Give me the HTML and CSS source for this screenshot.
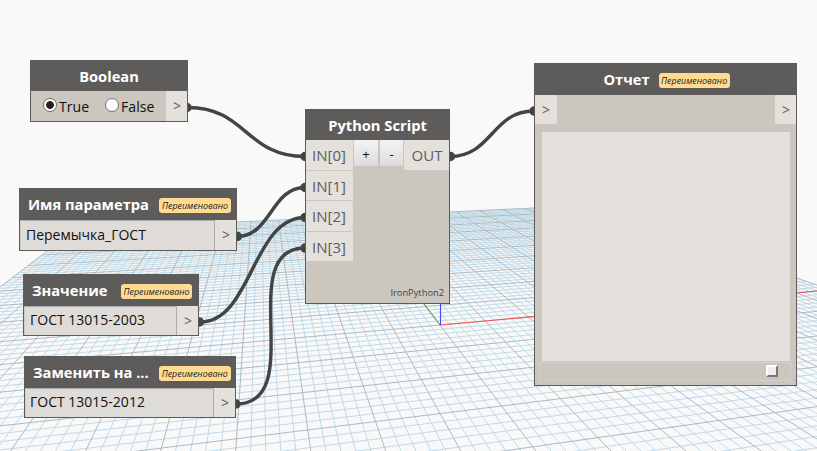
FILE: index.html
```html
<!DOCTYPE html>
<html lang="ru">
<head>
<meta charset="utf-8">
<title>Workspace</title>
<link rel="stylesheet" href="styles.css">
</head>
<body>
<main class="workspace">
  <svg class="layer" viewBox="0 0 817 451">
    <path id="minor" class="grid-minor"/>
    <path id="major" class="grid-major"/>
    <path id="axis-x" class="axis axis-x"/>
    <path id="axis-y" class="axis axis-y"/>
    <path class="axis axis-z" d="M440.5 325V200"/>
  </svg>
  <svg class="layer" viewBox="0 0 817 451">
    <g class="wires">
      <path d="M188 107.500C246 107.500 246 156.500 305 156.500"/>
      <path d="M237 236.500C271 236.500 271 187.500 305 187.500"/>
      <path d="M200 322C252 322 252 217.500 305 217.500"/>
      <path d="M236 404C309 404 233 248 305 248"/>
      <path d="M450 156.500C492 156.500 492 111 534 111"/>
    </g>
    <g class="wire-ends">
      <circle cx="187" cy="107.500" r="4.700"/><circle cx="305" cy="156.500" r="4.700"/>
      <circle cx="237.500" cy="236.500" r="4.700"/><circle cx="305" cy="187.500" r="4.700"/>
      <circle cx="199.500" cy="322" r="4.700"/><circle cx="305" cy="217.500" r="4.700"/>
      <circle cx="236" cy="404" r="4.700"/><circle cx="305" cy="248" r="4.700"/>
      <circle cx="450.500" cy="156.500" r="4.700"/><circle cx="534" cy="111" r="4.700"/>
    </g>
  </svg>

  <section class="node node-boolean">
    <header class="title"><span class="name">Boolean</span></header>
    <div class="body">
      <div class="choices">
        <span class="choice"><i class="radio checked"></i>True</span>
        <span class="choice"><i class="radio"></i>False</span>
      </div>
      <span class="port">&gt;</span>
    </div>
  </section>

  <section class="node node-param">
    <header class="title tagged"><span class="name">Имя параметра</span><span class="badge">Переименовано</span></header>
    <div class="body"><span class="field">Перемычка_ГОСТ</span><span class="port">&gt;</span></div>
  </section>

  <section class="node node-value">
    <header class="title tagged"><span class="name">Значение</span><span class="badge">Переименовано</span></header>
    <div class="body"><span class="field">ГОСТ 13015-2003</span><span class="port">&gt;</span></div>
  </section>

  <section class="node node-replace">
    <header class="title tagged"><span class="name">Заменить на ...</span><span class="badge">Переименовано</span></header>
    <div class="body"><span class="field">ГОСТ 13015-2012</span><span class="port">&gt;</span></div>
  </section>

  <section class="node node-python">
    <header class="title"><span class="name">Python Script</span></header>
    <div class="body">
      <div class="inputs"><span>IN[0]</span><span>IN[1]</span><span>IN[2]</span><span>IN[3]</span></div>
      <div class="buttons"><span>+</span><span>-</span></div>
      <div class="right"><span class="output">OUT</span><span class="engine">IronPython2</span></div>
    </div>
  </section>

  <section class="node node-report">
    <header class="title"><span class="name">Отчет</span><span class="badge">Переименовано</span></header>
    <div class="body">
      <div class="ports"><span class="port port-in">&gt;</span><span class="port">&gt;</span></div>
      <div class="screen"></div>
      <div class="footer"><i class="grip"></i></div>
    </div>
  </section>
</main>
<script src="grid.js"></script>
</body>
</html>
```
FILE: styles.css
```css
* { box-sizing: border-box; }
body { margin: 0; background: #f9f9f9; font-family: "Open Sans", sans-serif; }
.workspace { position: relative; width: 817px; height: 451px; overflow: hidden; }
.layer { position: absolute; left: 0; top: 0; width: 817px; height: 451px; }
.grid-minor { fill: none; stroke: #bed8e6; stroke-width: .95; }
.grid-major { fill: none; stroke: #a9b6bd; stroke-width: .95; }
.axis { fill: none; stroke-width: 1.1; }
.axis-x { stroke: #ff5050; }
.axis-y { stroke: #55a855; }
.axis-z { stroke: #4646ff; }
.wires { fill: none; stroke: #444; stroke-width: 3.4; }
.wire-ends { fill: #444; }

.node { position: absolute; display: flex; flex-direction: column; background: #cbc6be; border: 1px solid #5e5c5a; border-width: 0 1px 1px; }
.node-boolean { left: 30px; top: 60px; width: 158px; height: 62px; }
.node-param { left: 19px; top: 188px; width: 218px; height: 63px; }
.node-value { left: 23px; top: 274px; width: 176px; height: 62px; }
.node-replace { left: 24px; top: 356px; width: 212px; height: 62px; }
.node-python { left: 305px; top: 109px; width: 145px; height: 195px; }
.node-report { left: 534px; top: 63px; width: 263px; height: 323px; }

.title { flex: none; display: flex; align-items: center; justify-content: center; gap: 10px; height: 32px; margin: 0 -1px; background: #5e5c5a; color: #fff; font-size: 14.7px; font-weight: 700; line-height: 32px; white-space: nowrap; }
.node-boolean .title, .node-python .title { height: 31px; }
.tagged { justify-content: space-between; padding: 0 7px 0 9px; }
.badge { flex: none; width: 72px; height: 15px; margin-top: 2px; border-radius: 3px; background: #ffda91; color: #222; font-size: 8.9px; font-style: italic; font-weight: 400; line-height: 15px; text-align: center; }
.node-value .badge { width: 71px; }
.node-report .badge { width: 71px; }
.node-report .title { gap: 9px; padding-left: 2px; }
.node-replace .title, .node-replace .title.tagged { padding-left: 9px; }
.body { flex: 1; display: flex; min-height: 0; }
.port { flex: none; width: 21px; padding-left: 1px; background: #e4e1dc; color: #5e5c5a; font-size: 14px; line-height: 29px; text-align: center; }
.field { flex: 1; padding-left: 5px; background: #dfdcd7; border: 1px solid #abadb3; border-left-color: #cfccc8; border-bottom: 0; color: #111; font-size: 14px; line-height: 28px; white-space: nowrap; }
.node-value .field, .node-replace .field { line-height: 26px; }
.node-replace .field { padding-left: 4px; }
.choices { flex: 1; display: flex; gap: 16px; padding-left: 12px; }
.choice { display: flex; gap: 2px; font-size: 14.1px; line-height: 31px; color: #111; }
.radio { width: 14px; height: 14px; margin-top: 7px; border: 1px solid #707070; border-radius: 50%; background: #fff; }
.checked { background: radial-gradient(circle, #222 3.5px, #fff 4.2px); }

.inputs { display: flex; flex-direction: column; gap: 1px; width: 47px; }
.inputs span { height: 29.6px; padding-left: 6px; background: #e4e1dc; color: #5e5c5a; font-size: 15px; line-height: 31px; }
.buttons { display: flex; gap: 1px; margin-left: 1px; }
.buttons span { width: 25px; height: 26px; background: linear-gradient(#f3f3f3, #dddcda); border-right: 1px solid #c8c4be; color: #111; font-size: 13px; line-height: 28px; text-align: center; }
.buttons span + span { width: 24px; }
.right { flex: 1; display: flex; flex-direction: column; align-items: flex-end; justify-content: space-between; min-width: 0; }
.output { width: 45px; height: 30px; padding-left: 1px; background: #e4e1dc; color: #5e5c5a; font-size: 15px; line-height: 31px; text-align: center; }
.engine { margin: 0 5px 2px; font-size: 9.3px; line-height: 16px; color: #444; }

.node-report .body { flex-direction: column; }
.ports { display: flex; justify-content: space-between; height: 29px; }
.node-report .port { line-height: 30px; }
.port-in { width: 22px; padding-left: 0; }
.screen { flex: 1; margin: 8px 6px 1px 7px; background: #e4e1dc; }
.footer { display: flex; justify-content: flex-end; height: 19px; margin: 0 5px 4px; padding: 2px 12px 0 0; border: 1px solid #d4d1cd; }
.grip { width: 12px; height: 12px; background: #eee; border: 2px solid; border-color: #fff #77777c #77777c #fff; }
```
FILE: grid.js
```js
// Projects the ground plane of the 3D background onto the workspace.
// One unit is one major cell; u runs along the red axis, v towards the viewer.
function project(u, v) {
  const w = 1 + 0.01745 * u - 0.085 * v;
  const x = (440 + 53.5 * u - 22.1 * v) / w;
  const y = 88.5 + 236.5 / w;
  return x.toFixed(2) + ' ' + y.toFixed(2);
}
function line(u1, v1, u2, v2) {
  return 'M' + project(u1, v1) + 'L' + project(u2, v2);
}
const near = 7;
const far = -10;
const side = 10;
let minor = '';
let major = '';
for (let i = -50; i <= 50; i++) {
  const t = i / 5;
  let d = line(t, far, t, near);
  if (t <= near) d += line(-side, t, side, t);
  if (i % 5 === 0) major += d;
  else minor += d;
}
document.getElementById('minor').setAttribute('d', minor);
document.getElementById('major').setAttribute('d', major);
document.getElementById('axis-x').setAttribute('d', line(0, 0, side, 0));
document.getElementById('axis-y').setAttribute('d', line(0, 0, 0, far));
```
